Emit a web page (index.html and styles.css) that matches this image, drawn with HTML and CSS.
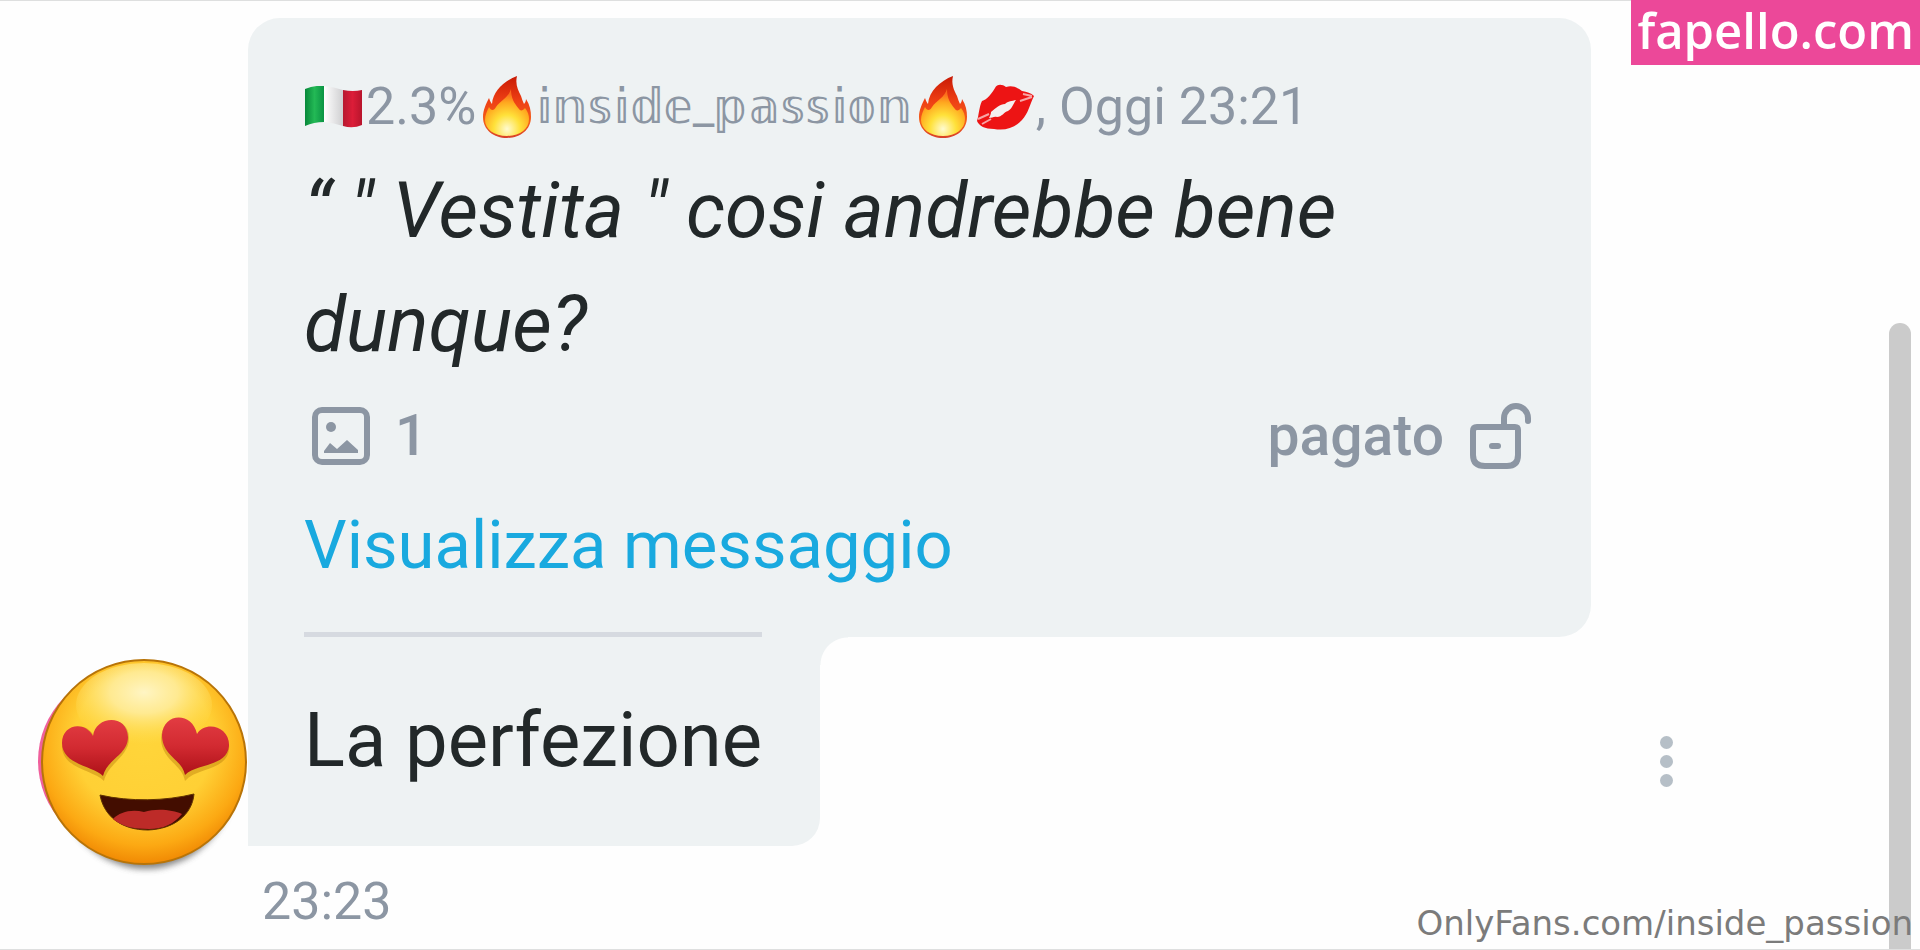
FILE: index.html
```
<!DOCTYPE html>
<html lang="it">
<head>
<meta charset="utf-8">
<meta name="viewport" content="width=device-width, initial-scale=1">
<title>Messaggi</title>
<link rel="stylesheet" href="styles.css">
</head>
<body>
<svg class="defs" aria-hidden="true">
  <defs>
    <linearGradient id="flame-outer" x1="0" y1="0" x2="0" y2="1">
      <stop offset="0" stop-color="#c81a05"/><stop offset=".4" stop-color="#ee3f14"/><stop offset=".75" stop-color="#f4601a"/><stop offset="1" stop-color="#d8402a"/>
    </linearGradient>
    <radialGradient id="flame-inner" cx=".5" cy=".85" r=".75">
      <stop offset="0" stop-color="#fffbd0"/><stop offset=".4" stop-color="#ffe13a"/><stop offset=".75" stop-color="#ffa81f"/><stop offset="1" stop-color="#fb6a1c"/>
    </radialGradient>
    <symbol id="fire" viewBox="0 0 48 62">
      <path fill="url(#flame-outer)" d="M34 0C32 8 35 14 38 20c1 3 2 6 3 8 1-1 2-3 2-5 4 6 5 12 5 18 0 13-11 21-24 21S0 54 0 41c0-7 3-13 6-19 1 3 2 5 3 6C10 15 21 5 34 0Z"/>
      <path fill="url(#flame-inner)" d="M28 13c0 9 3 14 8 20 1 2 4 2 6-1 3 4 4 7 4 11 0 10-9 17-22 17S2 53 2 44c0-5 2-9 4-13 2 4 5 4 7 0 4-6 13-10 15-18Z"/>
    </symbol>
  </defs>
</svg>

<main class="chat">
  <div class="avatar">
    <svg class="face" viewBox="0 0 216 222" role="img" aria-label="Faccina con occhi a cuore">
      <defs>
        <radialGradient id="skin" cx=".5" cy=".4" r=".62">
          <stop offset="0" stop-color="#ffd53a"/><stop offset=".55" stop-color="#ffd035"/><stop offset=".82" stop-color="#fca913"/><stop offset="1" stop-color="#ee8200"/>
        </radialGradient>
        <radialGradient id="shine" cx=".5" cy=".35" r=".62">
          <stop offset="0" stop-color="#fff5c4"/><stop offset=".4" stop-color="#fff0a8" stop-opacity=".8"/><stop offset="1" stop-color="#ffe258" stop-opacity="0"/>
        </radialGradient>
        <linearGradient id="heart" x1="0" y1="0" x2="0" y2="1">
          <stop offset="0" stop-color="#e23c42"/><stop offset=".5" stop-color="#d22a31"/><stop offset="1" stop-color="#ad1118"/>
        </linearGradient>
        <filter id="soft" x="-20%" y="-20%" width="140%" height="140%"><feGaussianBlur stdDeviation="3"/></filter>
      </defs>
      <ellipse cx="110" cy="117" rx="90" ry="97" fill="#555" opacity=".7" filter="url(#soft)"/>
      <circle cx="92" cy="106" r="90" fill="#f0609c"/>
      <circle cx="108" cy="107" r="102" fill="url(#skin)" stroke="#b87408" stroke-width="2"/>
      <ellipse cx="108" cy="50" rx="68" ry="42" fill="url(#shine)"/>
      <path fill="#a86a00" opacity=".35" d="M68 126C58 115 26 114 26 91c0-20 23-27 32-10 3-20 35-21 35 2 0 19-21 25-25 43Z"/>
      <path fill="#a86a00" opacity=".35" d="M149 126c-3-17-24-21-24-43 1-21 31-24 36-2 10-16 34-8 32 13-2 22-32 18-44 32Z"/>
      <path fill="url(#heart)" d="M67 121C58 111 26 110 26 88c0-18 22-23 31-7 2-20 34-23 35 1 0 18-21 22-25 39Z"/>
      <path fill="url(#heart)" d="M149 120c-3-16-23-19-23-40 1-22 30-24 35-1 9-14 33-7 32 12-2 21-32 17-44 29Z"/>
      <path fill="#430d00" stroke="#5f3200" stroke-width="1" d="M64 140c30 7 66 6 94-1-2 21-20 35-46 36-27 0-44-14-48-35Z"/>
      <path fill="#bd2b28" d="M77 164c7-7 18-10 31-7 13-4 29-2 38 2-8 10-19 15-33 15-16 0-28-3-36-10Z"/>
    </svg>
  </div>

  <section class="thread">
    <article class="card">
      <header class="meta">
        <svg class="flag" viewBox="0 0 58 42" role="img" aria-label="Italia">
          <defs>
            <linearGradient id="wave-green"><stop offset="0" stop-color="#07883a"/><stop offset=".5" stop-color="#23b955"/><stop offset="1" stop-color="#0b9444"/></linearGradient>
            <linearGradient id="wave-white"><stop offset="0" stop-color="#fff"/><stop offset="1" stop-color="#cfcfd1"/></linearGradient>
            <linearGradient id="wave-red"><stop offset="0" stop-color="#b71930"/><stop offset=".5" stop-color="#dc1d38"/><stop offset="1" stop-color="#b8152c"/></linearGradient>
          </defs>
          <path fill="url(#wave-green)" d="M1 3Q11-1 20 0v36Q10 36 1 40Z"/>
          <path fill="url(#wave-white)" d="M20 0q10 1 19 4v36q-9-3-19-4Z"/>
          <path fill="url(#wave-red)" d="M39 4q10 2 19 0v35q-9 4-19 1Z"/>
        </svg>
        <span>2.3%</span>
        <svg class="fire" role="img" aria-label="Fuoco"><use href="#fire"/></svg>
        <span class="name">𝕚𝕟𝕤𝕚𝕕𝕖_𝕡𝕒𝕤𝕤𝕚𝕠𝕟</span>
        <svg class="fire" role="img" aria-label="Fuoco"><use href="#fire"/></svg>
        <svg class="kiss" viewBox="0 0 58 48" role="img" aria-label="Bacio">
          <path fill="#ed1414" d="M6 18c5-1 10-8 13-13 2-4 7-4 11-1 7-2 12 1 16 4 5 1 9 2 12 5-4 8-6 18-12 24-7 8-17 11-28 9C9 46 3 43 1 38c2-6 2-14 5-20Z"/>
          <path fill="#f4f0f0" d="M15 29c5-4 9-8 14-8 3-3 7-3 11-4-3 4-4 9-8 11-4 1-6 6-11 6-3-1-5 1-8 1 1-2 2-4 2-6Z"/>
          <path stroke="#f7a6a6" stroke-width="2" fill="none" d="m2 36 11-5M44 18l12-4M6 41l9-5M47 11l9 2"/>
        </svg>
        <span>, Oggi 23:21</span>
      </header>
      <blockquote class="quote">“ " Vestita " cosi andrebbe bene dunque?</blockquote>
      <div class="status">
        <span class="media">
          <svg class="picture" viewBox="0 0 58 58" aria-hidden="true">
            <rect x="3" y="3" width="52" height="52" rx="7" fill="none" stroke="currentColor" stroke-width="6"/>
            <circle cx="19" cy="20" r="5" fill="currentColor"/>
            <path fill="currentColor" d="m12 44 6-8 7 6 10-9 11 10v3H12Z"/>
          </svg>
          <span>1</span>
        </span>
        <span class="paid">
          <span>pagato</span>
          <svg class="lock" viewBox="0 0 62 68" aria-hidden="true">
            <g fill="none" stroke="currentColor" stroke-width="6" stroke-linecap="round">
              <path d="M35 22V16a12 12 0 0 1 24 0v3"/>
              <path stroke-linejoin="round" d="M8 25h38q3 0 3 3v25q0 11-11 11H16Q4 64 4 53V29q0-4 4-4Z"/>
              <path d="M23 44h6"/>
            </g>
          </svg>
        </span>
      </div>
      <a class="open" href="#messaggio">Visualizza messaggio</a>
    </article>
    <article class="reply" id="messaggio">
      <p class="reply-text">La perfezione</p>
    </article>
    <time class="time">23:23</time>
  </section>

  <button class="more" type="button" aria-label="Altro">
    <span class="dot"></span><span class="dot"></span><span class="dot"></span>
  </button>
  <div class="track"><div class="thumb"></div></div>
</main>

<a class="brand" href="#fapello">fapello.com</a>
<a class="credit" href="#inside_passion">OnlyFans.com/inside_passion</a>
</body>
</html>
```
FILE: styles.css
```
* {
  box-sizing: border-box;
}

body {
  margin: 0;
  background: #fefefe;
  color: #222829;
  font-family: Roboto, "Liberation Sans", sans-serif;
}

svg {
  display: block;
  flex: none;
}

.defs {
  position: absolute;
  width: 0;
  height: 0;
}

.chat {
  display: flex;
  min-height: 100vh;
  border-top: 1px solid #dedfdf;
  border-bottom: 1px solid #dedfdf;
}

.avatar {
  display: flex;
  flex: none;
  align-items: flex-end;
  width: 248px;
  padding: 0 0 72px 36px;
}

.face {
  width: 216px;
  height: 222px;
}

.thread {
  flex: 1;
  padding-top: 17px;
}

.card {
  padding: 46px 57px 47px 56px;
  border-radius: 32px 32px 32px 0;
  background: #eef2f3;
}

.meta {
  display: flex;
  align-items: center;
  color: #8c96a3;
  font-size: 52px;
  line-height: 86px;
  white-space: pre;
}

.flag {
  width: 58px;
  height: 42px;
  margin-right: 4px;
}

.fire {
  width: 48px;
  height: 62px;
  margin: 0 4px 0 7px;
}

.kiss {
  width: 58px;
  height: 48px;
  margin: 0 2px 0 5px;
}

.name {
  font-family: Roboto, "DejaVu Sans", sans-serif;
  font-size: 48px;
}

.quote {
  margin: 4px 0 20px;
  font-size: 77px;
  font-style: italic;
  line-height: 114px;
}

.status {
  display: flex;
  justify-content: space-between;
  align-items: center;
  padding: 0 3px 0 8px;
  color: #8c96a3;
  font-size: 57px;
  font-weight: 500;
  line-height: 68px;
}

.media,
.paid {
  display: flex;
  align-items: center;
  gap: 25px;
}

.picture {
  width: 58px;
  height: 58px;
}

.lock {
  width: 62px;
  height: 68px;
}

.open {
  display: block;
  margin-top: 30px;
  color: #19a9df;
  font-size: 67px;
  line-height: 90px;
  text-decoration: none;
}

.reply {
  position: relative;
  width: fit-content;
  margin-top: -5px;
  padding: 0 58px 49px 56px;
  border-radius: 0 0 28px 0;
  background: #eef2f3;
}

/* Concave corner joining the reply to the card above it. */
.reply::after {
  content: "";
  position: absolute;
  top: 5px;
  left: 100%;
  width: 28px;
  height: 28px;
  background: radial-gradient(circle at 100% 100%, transparent 27px, #eef2f3 28px);
}

.reply-text {
  margin: 0;
  padding-top: 46px;
  border-top: 5px solid #d6dae0;
  font-size: 76px;
  line-height: 114px;
}

.time {
  display: block;
  padding: 26px 14px 16px;
  color: #8c96a3;
  font-size: 52px;
  line-height: 60px;
}

.more {
  display: flex;
  flex: none;
  flex-direction: column;
  align-self: flex-end;
  align-items: center;
  gap: 6px;
  width: 150px;
  margin: 0 74px 162px 0;
  padding: 0;
  border: 0;
  background: none;
}

.dot {
  width: 13px;
  height: 13px;
  border-radius: 50%;
  background: #b6bfc7;
}

.track {
  display: flex;
  flex: none;
  align-items: flex-end;
  width: 105px;
  padding-left: 74px;
}

.thumb {
  width: 22px;
  height: 66%;
  border-radius: 11px 11px 0 0;
  background: #cbcbcb;
}

.brand {
  position: absolute;
  top: 0;
  right: 0;
  padding: 0 6px 5px;
  background: #ec4899;
  color: #fff;
  font-family: "Open Sans", "Noto Sans", sans-serif;
  font-size: 49px;
  font-weight: 600;
  line-height: 60px;
  text-decoration: none;
}

.credit {
  position: absolute;
  right: 7px;
  bottom: 7px;
  color: #7b7b7b;
  font-family: "DejaVu Sans", sans-serif;
  font-size: 34px;
  line-height: 40px;
  text-decoration: none;
}
```
